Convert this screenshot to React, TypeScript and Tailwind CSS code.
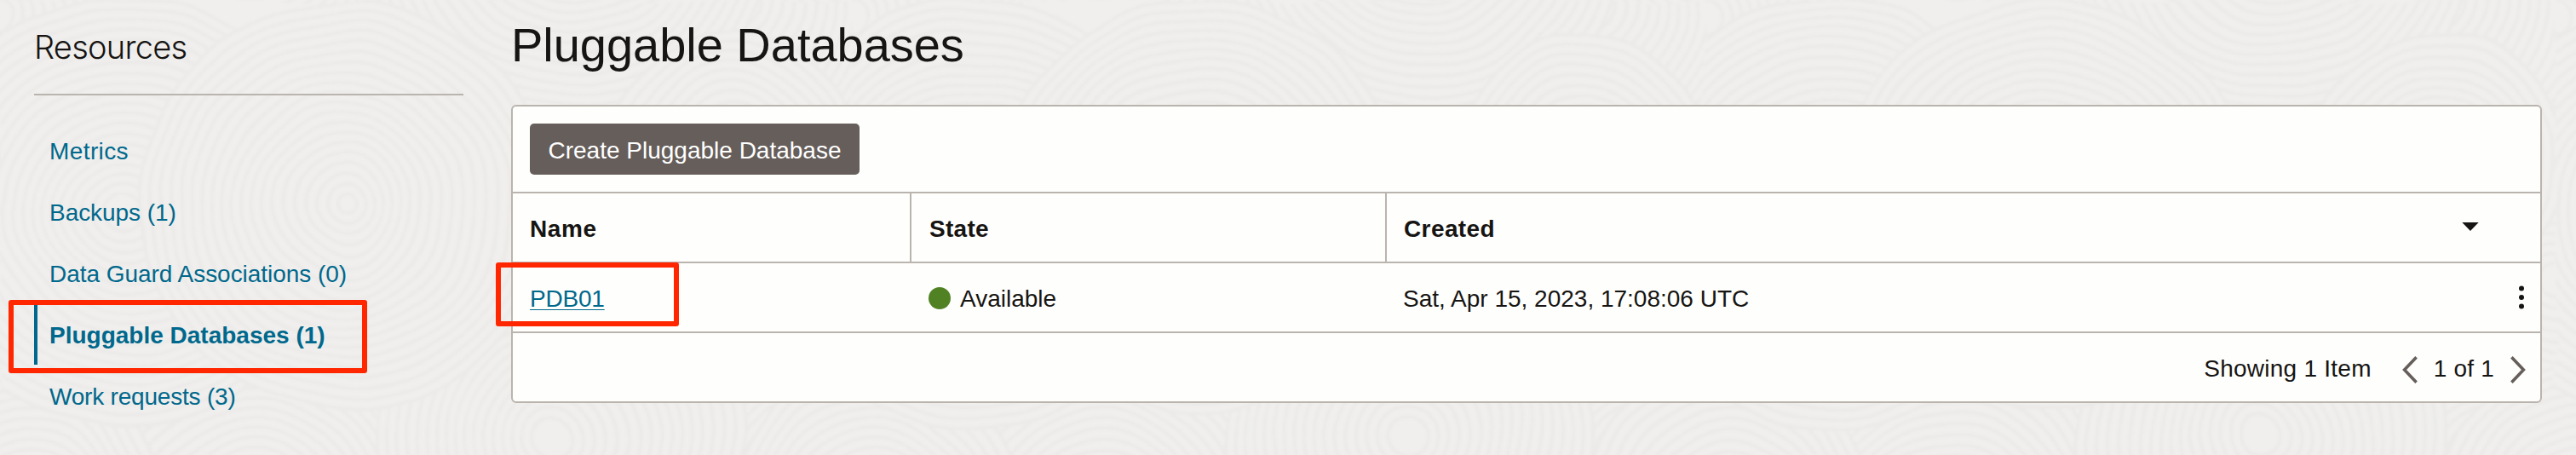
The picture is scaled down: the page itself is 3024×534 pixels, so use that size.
const TILE = 1000;

// Overlapping ring groups of the wood-grain backdrop, back to front.
const RINGS = [
  { x: 0, y: 20, r: 200 },
  { x: 1000, y: 20, r: 200 },
  { x: 860, y: 0, r: 180 },
  { x: 670, y: -90, r: 240 },
  { x: 0, y: 330, r: 200 },
  { x: 1000, y: 330, r: 200 },
  { x: 860, y: 190, r: 150 },
  { x: 940, y: 560, r: 170 },
  { x: 290, y: 620, r: 210 },
  { x: 30, y: 600, r: 170 },
  { x: 1030, y: 600, r: 170 },
  { x: 655, y: 510, r: 215 },
  { x: 145, y: 250, r: 250 },
  { x: 405, y: 240, r: 240 },
];

const STEP = 12;

function Backdrop() {
  return (
    <svg className="absolute inset-0 h-full w-full" aria-hidden="true">
      <defs>
        <filter id="grain" x="0" y="0" width="100%" height="100%">
          <feTurbulence type="fractalNoise" baseFrequency="0.007" numOctaves={2} seed={4} />
          <feDisplacementMap in="SourceGraphic" scale={24} xChannelSelector="R" yChannelSelector="G" />
          <feGaussianBlur stdDeviation="1.5" />
        </filter>
        <pattern id="rings" width={TILE} height={700} patternUnits="userSpaceOnUse">
          <rect width={TILE} height={700} fill="#f0efed" />
          {RINGS.map((g, i) => (
            <g key={i} fill="#f0efed" stroke="#ebeae8" strokeWidth={4}>
              {Array.from({ length: Math.floor(g.r / STEP) }, (_, k) => (
                <circle key={k} cx={g.x} cy={g.y} r={g.r - k * STEP} />
              ))}
            </g>
          ))}
        </pattern>
      </defs>
      <rect x="-30" y="-30" width="3090" height="600" fill="url(#rings)" filter="url(#grain)" />
    </svg>
  );
}

const LINKS = [
  { label: "Metrics", track: "tracking-[0.4px]" },
  { label: "Backups (1)", track: "tracking-[-0.05px]" },
  { label: "Data Guard Associations (0)", track: "tracking-[-0.04px]" },
  { label: "Pluggable Databases (1)", track: "", active: true },
  { label: "Work requests (3)", track: "tracking-[-0.2px]" },
];

function Sidebar() {
  return (
    <aside className="ml-10 w-[504px] shrink-0">
      <h2 className="border-b-2 border-[#bab4ae] pt-[27px] pb-[27px] font-['Inter',sans-serif] text-[38px] leading-[56px] font-light tracking-[-0.75px]">
        Resources
      </h2>
      <nav className="mt-7 text-[#00688c]">
        {LINKS.map((l) => (
          <a
            key={l.label}
            className={`relative flex h-[72px] items-center border-l-4 pt-[4px] pl-[14px] ${l.track} ${
              l.active ? "border-[#00688c] font-bold" : "border-transparent"
            }`}
          >
            {l.label}
            {l.active && (
              <span className="absolute -top-1 -left-[34px] h-[86px] w-[421px] rounded-[3px] border-6 border-[#ff2600]" />
            )}
          </a>
        ))}
      </nav>
    </aside>
  );
}

function PdbTable() {
  return (
    <div className="rounded-[6px] border-2 border-[#bab4ae] bg-[#fefefc]">
      <div className="flex h-[100px] items-center pl-5">
        <button className="h-[60px] w-[387px] rounded-[5px] bg-[#665e5b] pt-[3px] text-white">
          Create Pluggable Database
        </button>
      </div>
      <div className="flex h-[82px] border-t-2 border-[#bab4ae] font-bold">
        <div className="flex w-[468px] items-center border-r-2 border-[#bab4ae] pt-[3px] pl-5 tracking-[0.6px]">Name</div>
        <div className="flex w-[558px] items-center border-r-2 border-[#bab4ae] pt-[3px] pl-[21px] tracking-[0.3px]">State</div>
        <div className="flex flex-1 items-center justify-between pr-[72px] pl-5 tracking-[0.4px]">
          <span className="pt-[3px]">Created</span>
          <svg className="-mt-[2px] h-[10px] w-[20px]" viewBox="0 0 20 10">
            <path d="M0.3 0h19.4L10 10z" fill="#161513" />
          </svg>
        </div>
      </div>
      <div className="flex h-[82px] border-t-2 border-[#bab4ae]">
        <div className="relative flex w-[468px] items-center pt-[3px] pl-5">
          <a className="tracking-[-0.2px] text-[#00688c] underline decoration-1 underline-offset-[3px]">PDB01</a>
          <span className="absolute -top-[1px] -left-5 h-[75px] w-[215px] rounded-[3px] border-6 border-[#ff2600]" />
        </div>
        <div className="flex w-[558px] items-center gap-[11px] pl-5">
          <span className="mt-[2px] h-[26px] w-[26px] rounded-full bg-[#508223]" />
          <span className="pt-[3px]">Available</span>
        </div>
        <div className="flex flex-1 items-center justify-between pr-[19px] pl-[19px]">
          <span className="pt-[3px]">Sat, Apr 15, 2023, 17:08:06 UTC</span>
          <svg className="h-[28px] w-[6px]" viewBox="0 0 6 28" fill="#161513">
            <circle cx="3" cy="3.5" r="3" />
            <circle cx="3" cy="14" r="3" />
            <circle cx="3" cy="24.5" r="3" />
          </svg>
        </div>
      </div>
      <div className="flex h-[82px] items-center justify-end border-t-2 border-[#bab4ae] pr-[17px]">
        <span className="pt-[3px] tracking-[0.25px]">Showing 1 Item</span>
        <svg className="mt-[6px] ml-[36px] h-[34px] w-[18px]" viewBox="0 0 18 34" fill="none" stroke="#665e5b" strokeWidth="3.6">
          <path d="M16.6 2.2L2.6 17l14 14.8" />
        </svg>
        <span className="mx-[19px] pt-[3px] tracking-[0.2px]">1 of 1</span>
        <svg className="mt-[6px] h-[34px] w-[18px]" viewBox="0 0 18 34" fill="none" stroke="#665e5b" strokeWidth="3.6">
          <path d="M1.4 2.2l14 14.8-14 14.8" />
        </svg>
      </div>
    </div>
  );
}

export default function App() {
  return (
    <div className="relative h-[534px] w-full overflow-hidden bg-[#f0efed] font-['Liberation_Sans',Arial,sans-serif] text-[28px] leading-[40px] text-[#161513]">
      <Backdrop />
      <div className="relative flex">
        <Sidebar />
        <main className="mr-10 ml-14 flex-1">
          <h1 className="mb-[38px] pt-[21px] text-[56px] leading-[64px] tracking-[-0.03px]">Pluggable Databases</h1>
          <PdbTable />
        </main>
      </div>
    </div>
  );
}
